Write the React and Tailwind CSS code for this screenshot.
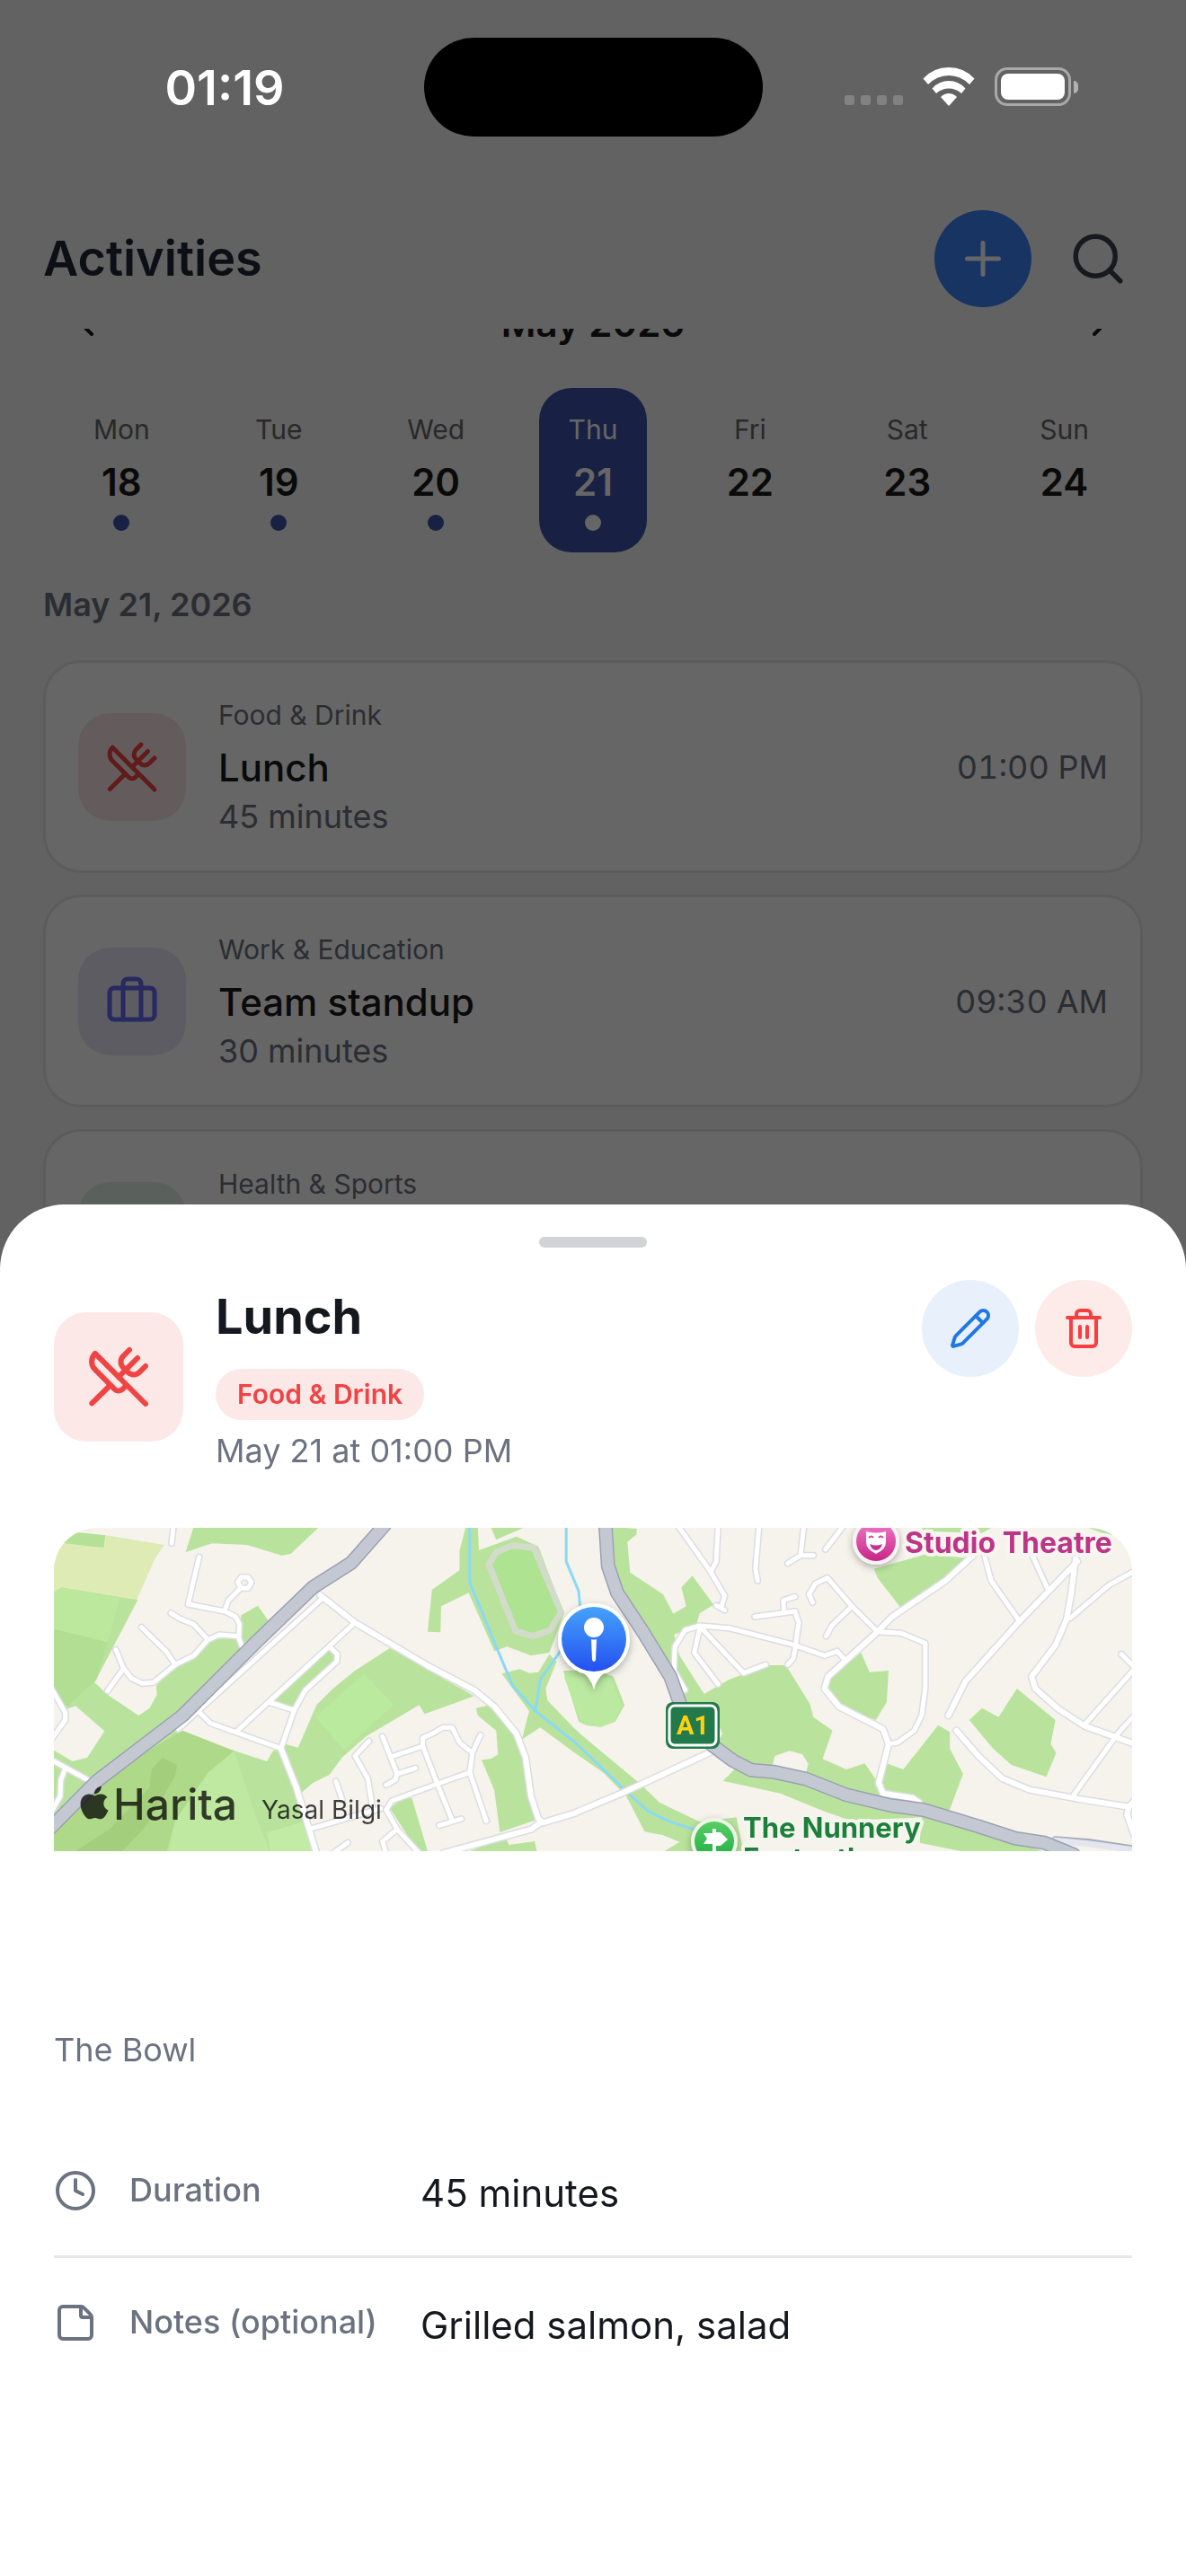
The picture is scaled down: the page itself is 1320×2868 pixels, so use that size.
import {
  Briefcase,
  ChevronLeft,
  ChevronRight,
  Clock,
  Dumbbell,
  Pencil,
  Plus,
  Search,
  StickyNote,
  Trash2,
  UtensilsCrossed,
} from "lucide-react";
import { FaApple } from "react-icons/fa";

const days = [
  { name: "Mon", date: 18, busy: true },
  { name: "Tue", date: 19, busy: true },
  { name: "Wed", date: 20, busy: true },
  { name: "Thu", date: 21, busy: true, selected: true },
  { name: "Fri", date: 22 },
  { name: "Sat", date: 23 },
  { name: "Sun", date: 24 },
];

const activities = [
  {
    category: "Food & Drink",
    title: "Lunch",
    duration: "45 minutes",
    time: "01:00 PM",
    icon: UtensilsCrossed,
    tile: "bg-[#fae5e5] text-[#ef4444]",
  },
  {
    category: "Work & Education",
    title: "Team standup",
    duration: "30 minutes",
    time: "09:30 AM",
    icon: Briefcase,
    tile: "bg-[#e5e7f5] text-[#6366f1]",
  },
  {
    category: "Health & Sports",
    title: "Morning run",
    duration: "30 minutes",
    time: "07:00 AM",
    icon: Dumbbell,
    tile: "bg-[#e0f2e8] text-[#10b981]",
  },
];

// The base map is drawn in two tiles that share one projection.
const WEST = "translate(-20 -21) scale(.40816 .33333)";
const EAST = "translate(580 -21) scale(.40816 .33333)";

const parks = [
  {
    tile: WEST,
    shapes: [
      "M45 55L49 270L70 262L278 303L160 580L195 620L280 690L310 665L330 620L328 590L380 525L480 435L545 430L562 462L400 700L385 740L410 755L630 843L645 810L680 785L715 797L765 655L810 600L870 540L965 465L1195 625L1060 685L1045 655L900 760L835 830L800 888L755 915L722 950L770 1150H40V55Z",
      "M560 355L605 323L635 375L560 460L550 430Z",
      "M430 60H772L695 150L670 155L575 120L480 115L408 145Z",
      "M800 470L820 490L815 515L735 610L705 670L645 645Z",
      "M1172 60H1205L1208 138L1310 92L1370 125L1440 350L1400 480L1350 490L1285 460L1250 475L1180 280L1105 325L1103 412L1068 410L1080 270L1155 205V140Z",
      "M1240 60H1335L1255 103Z",
      "M1270 550L1320 535L1345 548L1370 545L1400 485L1420 510L1390 600L1395 640L1470 735L1570 850V900L1470 815L1420 770L1375 730L1325 770L1345 675Z",
      "M1200 665L1240 655L1310 750L1330 800L1355 950L1360 1040L1265 1080L1250 940L1215 838L1240 835L1260 820L1255 740L1205 690Z",
      "M1280 1095L1290 1122L1360 1110L1367 1150H1170Z",
      "M965 1000L1000 965H1025L1068 1142V1150H1045Z",
    ],
  },
  {
    tile: EAST,
    shapes: [
      "M103 60L168 66V85L143 110L150 212L240 285L268 350L303 325L290 262L320 223L378 320L340 348L330 390L270 420L285 490L352 618L420 570L525 522H575L640 650L650 695L702 740L675 835L740 870L790 850L835 930L850 850L895 870L990 722L1022 745V800L1058 885L1020 1010L920 985L780 960L630 910L470 870L400 820L300 640L190 430L110 240Z",
      "M435 870L403 908L560 950L680 1010L750 1040L945 1030L940 1115L1080 1150H1290L1200 1110L950 1020L700 960L600 910Z",
      "M780 480L803 545L855 540L850 645L820 705L720 660L690 600V570Z",
      "M815 200L825 230L888 330L1000 250L1075 165L960 150Z",
      "M1205 600L1310 705L1297 785L1312 815L1285 895L1190 855L1140 800L1075 705L1110 665L1155 695Z",
      "M1395 60Q1450 66 1482 90L1440 82Z",
      "M945 60H1140L1110 80L950 74Z",
      "M-32 540L10 710L30 722L70 728L110 710L135 655L105 560L60 540Z",
      "M-2 735L180 920L230 980L340 1045L440 1030L460 1150H235L285 1112L240 1090L190 1078L140 960L65 865L-2 812Z",
    ],
  },
];

const fields = [
  { d: "M45 100L185 130L192 88L350 120L325 165L275 303L70 262L45 285Z", fill: "#dfebb4" },
  { d: "M45 110L110 78L190 88L185 130L80 115Z", fill: "#b4e195" },
  { d: "M70 262L230 295L195 445L45 400V280Z", fill: "#bce89e" },
  { d: "M45 400L195 445L165 570L85 660L45 600Z", fill: "#b2de94" },
  { d: "M895 550L975 655L840 805L762 695Z", fill: "#b9ea9d" },
  { d: "M540 808L600 1030L640 1150H360L380 1040L470 880Z", fill: "#bfe9a1" },
  { d: "M400 740L540 808L470 880L380 1040L355 1150H45V1080L165 910Z", fill: "#aed988" },
  { d: "M345 830L385 855L380 890L300 1060L230 1150H100L200 1070L310 930L315 870Z", fill: "#a3cf7d" },
  { d: "M630 1080L730 1045L760 1150H640Z", fill: "#c2eba5" },
];

const cutouts = [
  { tile: WEST, d: "M40 590L85 668L108 658L187 742L140 830L100 843L40 800Z" },
  { tile: EAST, d: "M538 858L545 825L585 808L620 820L636 850L630 882Z" },
  { tile: EAST, d: "M390 720L402 750L392 772Z" },
];

const streets = [
  {
    tile: WEST,
    lines: [
      "M388 735L780 300",
      "M440 672L475 715L668 800L705 670L735 605L820 510L822 485L800 460",
      "M865 385L550 740",
      "M635 645L703 672",
      "M445 160L415 318L515 342L545 360L555 385L553 430L562 460",
      "M515 338L525 305L560 262",
      "M550 245L560 228L578 228L588 245L578 265L560 265Z",
      "M368 348L395 368L430 385L468 435",
      "M553 425L500 420L468 438L430 490L380 520L320 580L290 583L260 565L238 530L218 470",
      "M288 395L325 440L355 475L380 520",
      "M238 535L195 608",
      "M375 60L370 115",
      "M45 605L80 680V705L45 765",
      "M45 840L152 912",
      "M80 868L68 905L66 960L45 1005",
      "M908 775L870 825L905 900L918 1000",
      "M945 760L985 885L980 905L955 922",
      "M985 885L1035 866",
      "M975 825L1055 792V765L1090 745",
      "M1055 792L1095 920L1135 1040",
      "M1100 1057L1160 1035",
      "M1095 740L1110 730H1135L1155 780L1190 815L1212 755",
      "M1190 815L1183 880L1228 1042",
      "M1183 880L1095 918L970 975L955 1005L985 1070L1045 1150",
      "M985 1070L945 1110L955 1150",
      "M745 1070L940 1000",
      "M818 910L835 970",
      "M810 1150L850 1115",
    ],
  },
  {
    tile: EAST,
    lines: [
      "M300 605L270 540L272 460L300 405L340 390L420 398L600 455L680 490L715 475L735 503",
      "M340 400L325 480L390 585",
      "M345 398L460 548L520 520",
      "M280 55L370 210L408 290L400 325M385 322L408 338",
      "M390 55L385 175L370 210",
      "M502 55L492 200L498 240",
      "M624 55L615 155L580 182M615 155H650",
      "M730 60L683 135",
      "M490 360L600 342L610 380L600 470L595 500L580 520",
      "M570 340L568 305L600 293",
      "M648 312L638 285L655 250L688 230L755 325L825 410",
      "M755 325L700 390L685 425",
      "M825 410L890 415L955 448V600L945 690L925 740L880 780L855 785",
      "M1115 150L1135 240L1212 375",
      "M1245 150L1290 270",
      "M1350 365L1455 255L1525 208",
      "M1390 720L1525 535M1490 485L1525 528",
      "M1360 955L1480 750L1525 690",
    ],
  },
];

const roads = [
  {
    tile: WEST,
    lines: [
      "M775 288L870 380L1070 525L1195 605L1250 660L1310 750L1335 830L1350 960L1370 1035L1382 1048L1472 1015",
      "M1380 1045L1350 1070L1110 1150",
      "M668 800L710 930L765 1150",
    ],
  },
  {
    tile: EAST,
    lines: [
      "M0 1015L130 948L370 812",
      "M1090 150L1010 240L865 360L825 410L690 560L680 600L720 660L840 735L855 785L828 915L840 950L920 965L938 980",
      "M1370 175L1212 375L1065 575L1018 690",
      "M1365 165L1352 290L1340 370L1310 455L1245 560L1255 600L1320 670L1390 725L1525 785",
      "M1040 740L1100 825L1165 900L1240 938L1370 968L1510 995L1505 1020L1525 1090M1510 995L1525 975",
    ],
  },
];

const highways = [
  { tile: WEST, d: "M40 1065L165 910L400 690L600 445L755 262L860 180L950 55" },
  {
    tile: EAST,
    d: "M83 55L90 190L115 280L185 410L260 560L295 680L375 790L430 840L480 872L540 878L630 902L740 955L860 990L950 1005L1100 1060L1200 1100L1280 1115L1360 1155",
  },
];

const water = [
  { tile: WEST, d: "M1183 55V245L1215 340L1255 460L1300 590L1362 675L1472 782" },
  { tile: WEST, d: "M1446 55V175L1480 275L1485 340" },
  { tile: WEST, d: "M1430 475L1375 570L1362 675" },
  { tile: EAST, d: "M0 780L150 955L200 1010L260 1045L330 1072" },
];

function Line({ tile, d, stroke, width }) {
  return (
    <path
      d={d}
      transform={tile}
      fill="none"
      stroke={stroke}
      strokeWidth={width}
      strokeLinecap="round"
      strokeLinejoin="round"
      vectorEffect="non-scaling-stroke"
    />
  );
}

function Roads({ groups, stroke, width }) {
  return groups.map((group) =>
    group.lines.map((d) => (
      <Line key={d} tile={group.tile} d={d} stroke={stroke} width={width} />
    ))
  );
}

function MapView() {
  return (
    <div className="relative h-[360px] overflow-hidden rounded-t-[48px] bg-[#f5f3ec]">
      <svg
        className="h-full w-full"
        viewBox="0 0 1200 360"
        preserveAspectRatio="xMidYMid slice"
        role="img"
        aria-label="Map"
      >
        <defs>
          <linearGradient id="pin" x1="0" y1="0" x2="0" y2="1">
            <stop offset="0" stopColor="#46a2fb" />
            <stop offset="1" stopColor="#2350f0" />
          </linearGradient>
          <linearGradient id="theatre" x1="0" y1="0" x2="0" y2="1">
            <stop offset="0" stopColor="#f07cc8" />
            <stop offset="1" stopColor="#c92485" />
          </linearGradient>
          <linearGradient id="trail" x1="0" y1="0" x2="0" y2="1">
            <stop offset="0" stopColor="#56cf62" />
            <stop offset="1" stopColor="#1fae46" />
          </linearGradient>
          <filter id="shadow" x="-30%" y="-30%" width="160%" height="160%">
            <feDropShadow dx="0" dy="3" stdDeviation="4" floodOpacity="0.3" />
          </filter>
        </defs>

        {parks.map((group) =>
          group.shapes.map((d) => (
            <path key={d} d={d} transform={group.tile} fill="#b9e39d" />
          ))
        )}
        {fields.map((field) => (
          <path key={field.d} d={field.d} transform={WEST} fill={field.fill} />
        ))}
        {cutouts.map((cut) => (
          <path key={cut.d} d={cut.d} transform={cut.tile} fill="#f5f3ec" />
        ))}

        {/* running track */}
        <path
          d="M1300 122L1358 130L1432 345L1402 405L1355 425L1308 408L1235 185L1255 145Z"
          transform={WEST}
          fill="#ade391"
          stroke="#d3dcca"
          strokeWidth="7"
          strokeLinejoin="round"
          vectorEffect="non-scaling-stroke"
        />
        <path
          d="M-30 560L12 700L30 722L70 728L108 708L128 660L95 560Z"
          transform={EAST}
          fill="#bbe9a0"
        />

        {water.map((river) => (
          <Line key={river.d} {...river} stroke="#8bd9f3" width="3" />
        ))}

        <Roads groups={streets} stroke="#dcdde2" width="8" />
        <Roads groups={roads} stroke="#dcdde2" width="9" />
        <Roads groups={streets} stroke="#ffffff" width="5" />
        <Roads groups={roads} stroke="#ffffff" width="6" />

        <Line tile={EAST} d="M1310 1105L1400 1113L1525 1136" stroke="#a9aebb" width="8" />
        <Line tile={EAST} d="M1310 1108L1400 1118L1525 1140" stroke="#e3e6ee" width="7" />
        {highways.map((road) => (
          <Line key={road.d} {...road} stroke="#9ba1b1" width="16" />
        ))}
        {highways.map((road) => (
          <Line key={road.d} {...road} stroke="#c3c8d2" width="13" />
        ))}

        {/* road shield */}
        <rect x="681" y="194" width="60" height="52" rx="8" fill="#227a4b" />
        <rect x="685" y="198" width="52" height="44" rx="6" fill="none" stroke="#fff" strokeWidth="3" />
        <text x="711" y="230" textAnchor="middle" className="fill-[#ffd012] font-['Roboto'] text-[29px] font-bold">
          A1
        </text>

        {/* theatre */}
        <circle cx="915" cy="15" r="26" fill="#f8f5f1" filter="url(#shadow)" />
        <circle cx="915" cy="15" r="22" fill="url(#theatre)" />
        <path d="M904 4Q915 7 926 4V16Q926 24 915 29Q904 24 904 16Z" fill="#fff" />
        <path d="M907 11Q910 8 912 11M918 11Q920 8 923 11" fill="none" stroke="#d9419c" strokeWidth="2" />
        <path d="M908 18Q915 21 922 18Q920 25 915 25Q910 25 908 18Z" fill="#cf2f8e" />
        <text
          x="947"
          y="28"
          stroke="#f8f5f1"
          strokeWidth="8"
          strokeLinejoin="round"
          className="fill-[#bd3586] text-[32px] font-bold [paint-order:stroke]"
        >
          Studio Theatre
        </text>

        {/* footpath */}
        <circle cx="735" cy="349" r="26" fill="#eef5e6" filter="url(#shadow)" />
        <circle cx="735" cy="349" r="22" fill="url(#trail)" />
        <path d="M733 335H737V339H742L750 347L742 354H737V362H733V352H723L727 346L723 340H733Z" fill="#fff" />
        <text
          x="767"
          y="345"
          stroke="#f4f5ec"
          strokeWidth="8"
          strokeLinejoin="round"
          className="fill-[#1c7f3c] text-[31px] font-bold [paint-order:stroke]"
        >
          <tspan>The Nunnery</tspan>
          <tspan x="767" dy="34">Footpath</tspan>
        </text>

        {/* selected place */}
        <g filter="url(#shadow)">
          <circle cx="601" cy="124" r="40" fill="#fff" />
          <path d="M583 157Q597 164 601 180Q605 164 619 157Z" fill="#fff" />
        </g>
        <circle cx="601" cy="124" r="36" fill="url(#pin)" />
        <circle cx="601" cy="111" r="11" fill="#fff" />
        <path d="M598 124Q601 125 604 124L603 147Q601 151 599 147Z" fill="#fff" />
      </svg>

      <div className="absolute bottom-7 left-7 flex items-end gap-[27px] text-black/75">
        <div className="flex items-center">
          <FaApple size={42} className="mb-1 -ml-1" />
          <span className="text-[48px] leading-[48px] font-medium">Harita</span>
        </div>
        <a href="#legal" className="text-[28px] leading-[36px]">
          Yasal Bilgi
        </a>
      </div>
    </div>
  );
}

function StatusBar() {
  return (
    <div className="grid h-[186px] grid-cols-3 items-start text-white">
      <span className="pt-[72px] pl-[60px] text-center text-[54px] leading-[51px] font-semibold">
        01:19
      </span>
      <div className="mx-auto mt-[42px] h-[110px] w-[377px] rounded-full bg-black" />
      <div className="flex items-end justify-center gap-[22px] pt-[75px] pr-[60px]">
        <div className="flex gap-[7px] pb-px">
          {[0, 1, 2, 3].map((bar) => (
            <span key={bar} className="size-[11px] rounded-[3px] bg-white/20" />
          ))}
        </div>
        <svg width="58" height="43" viewBox="0 0 58 43" fill="#fff" aria-label="Wi-Fi">
          <path d="M29 43L20 33Q24 29 29 29Q34 29 38 33Z" />
          <path d="M10.500 23.500Q18 15 29 15Q40 15 47.500 23.500L43 29Q37 23.500 29 23.500Q21 23.500 15 29Z" />
          <path d="M0.500 12.500Q12 0 29 0Q46 0 57.500 12.500L52 19Q42 9 29 9Q16 9 6 19Z" />
        </svg>
        <div className="flex items-center gap-[3px]">
          <div className="h-[43px] w-[85px] rounded-[14px] border-[3px] border-white/45 p-1">
            <div className="h-full rounded-[8px] bg-white" />
          </div>
          <span className="h-[14px] w-[5px] rounded-r-full bg-white/50" />
        </div>
      </div>
    </div>
  );
}

function Day({ day }) {
  return (
    <button
      aria-pressed={Boolean(day.selected)}
      className={
        day.selected
          ? "mx-auto flex h-[183px] w-[120px] flex-col items-center rounded-[36px] bg-[#3d51a8] pt-6 text-white"
          : "mx-auto flex h-[183px] w-[120px] flex-col items-center rounded-[36px] pt-6 text-[#1a1a1a]"
      }
    >
      <span
        className={
          day.selected
            ? "text-[30px] leading-[45px]"
            : "text-[30px] leading-[45px] text-[#666666]"
        }
      >
        {day.name}
      </span>
      <span className="mt-1.5 text-[42px] leading-[60px] font-semibold">{day.date}</span>
      {day.busy && (
        <span
          className={
            day.selected
              ? "mt-1.5 size-[18px] rounded-full bg-white"
              : "mt-1.5 size-[18px] rounded-full bg-[#3d51a8]"
          }
        />
      )}
    </button>
  );
}

function ActivityCard({ activity }) {
  const Icon = activity.icon;
  return (
    <li className="flex items-center gap-9 rounded-[42px] border-[3px] border-[#e5e5e5] bg-white p-9">
      <div className={`flex size-[120px] shrink-0 items-center justify-center rounded-[36px] ${activity.tile}`}>
        <Icon size={60} />
      </div>
      <div className="flex-1">
        <p className="text-[30px] leading-[45px] text-[#6b7280]">{activity.category}</p>
        <h3 className="mt-1.5 text-[42px] leading-[60px] font-medium text-[#1a1a1a]">
          {activity.title}
        </h3>
        <p className="text-[36px] leading-[48px] text-[#6b7280]">{activity.duration}</p>
      </div>
      <time className="text-[36px] leading-[48px] text-[#6b7280] tabular-nums">
        {activity.time}
      </time>
    </li>
  );
}

function DetailRow({ icon: Icon, label, value }) {
  return (
    <div className="flex items-center py-[33px]">
      <Icon size={48} className="shrink-0 text-[#6b7280]" />
      <dt className="ml-9 w-[324px] shrink-0 pb-0.5 text-[36px] leading-[48px] font-medium text-[#6b7280]">
        {label}
      </dt>
      <dd className="flex-1 pt-1.5 text-[42px] leading-[72px] text-[#15181e]">{value}</dd>
    </div>
  );
}

function ActivitySheet() {
  return (
    <section
      role="dialog"
      aria-label="Lunch"
      className="rounded-t-[72px] bg-white px-[60px] pt-9 pb-[210px]"
    >
      <div className="mx-auto h-3 w-[120px] rounded-full bg-[#d1d3d6]" />

      <div className="mt-9 flex items-center">
        <div className="flex size-[144px] shrink-0 items-center justify-center rounded-[36px] bg-[#fde8e8] text-[#ef4444]">
          <UtensilsCrossed size={72} />
        </div>
        <div className="ml-9 flex-1">
          <h2 className="text-[54px] leading-[81px] font-bold text-[#15181e]">Lunch</h2>
          <span className="mt-[18px] block w-fit rounded-full bg-[#fde8e8] px-6 text-[30px] leading-[57px] font-semibold text-[#ef4444]">
            Food &amp; Drink
          </span>
          <p className="mt-[9px] text-[36px] leading-[51px] text-[#6b7280]">
            May 21 at 01:00 PM
          </p>
        </div>
        <div className="flex gap-[18px] self-start">
          <button
            aria-label="Edit"
            className="flex size-[108px] items-center justify-center rounded-full bg-[#e8f0fc] text-[#2078e0]"
          >
            <Pencil size={48} />
          </button>
          <button
            aria-label="Delete"
            className="flex size-[108px] items-center justify-center rounded-full bg-[#fdebea] text-[#f83e3e]"
          >
            <Trash2 size={48} />
          </button>
        </div>
      </div>

      <div className="mt-[60px]">
        <MapView />
      </div>

      <p className="mt-[197px] text-[36px] leading-[48px] text-[#6b7280]">The Bowl</p>

      <dl className="mt-[61px] divide-y-[3px] divide-[#e6e7e9]">
        <DetailRow icon={Clock} label="Duration" value="45 minutes" />
        <DetailRow icon={StickyNote} label="Notes (optional)" value="Grilled salmon, salad" />
      </dl>
    </section>
  );
}

export default function App() {
  return (
    <div className="min-h-screen bg-[#f5f5f5] font-['Inter',sans-serif]">
      <main className="px-12 pt-[186px]">
        <header className="flex items-center pt-12 pr-3 pb-6">
          <h1 className="flex-1 text-[54px] leading-[66px] font-semibold text-[#1f2937]">
            Activities
          </h1>
          <button
            aria-label="Add activity"
            className="flex size-[108px] items-center justify-center rounded-full bg-[#3b82f6] text-white"
          >
            <Plus size={60} />
          </button>
          <button aria-label="Search" className="ml-9 p-[5px] text-[#374151]">
            <Search size={66} />
          </button>
        </header>

        <div className="overflow-hidden">
          <div className="-mt-[30px] flex items-center justify-between px-6 text-[#1a1a1a]">
            <button aria-label="Previous week">
              <ChevronLeft size={48} />
            </button>
            <span className="text-[42px] leading-[48px] font-semibold">May 2026</span>
            <button aria-label="Next week">
              <ChevronRight size={48} />
            </button>
          </div>
          <div className="mt-12 grid grid-cols-7">
            {days.map((day) => (
              <Day key={day.name} day={day} />
            ))}
          </div>
        </div>

        <h2 className="mt-9 mb-[39px] text-[36px] leading-[45px] font-semibold text-[#6b7280]">
          May 21, 2026
        </h2>
        <ul className="flex flex-col gap-6">
          {activities.map((activity) => (
            <ActivityCard key={activity.title} activity={activity} />
          ))}
        </ul>
      </main>

      <div className="fixed inset-0 flex flex-col justify-between bg-black/60">
        <StatusBar />
        <ActivitySheet />
      </div>
    </div>
  );
}
